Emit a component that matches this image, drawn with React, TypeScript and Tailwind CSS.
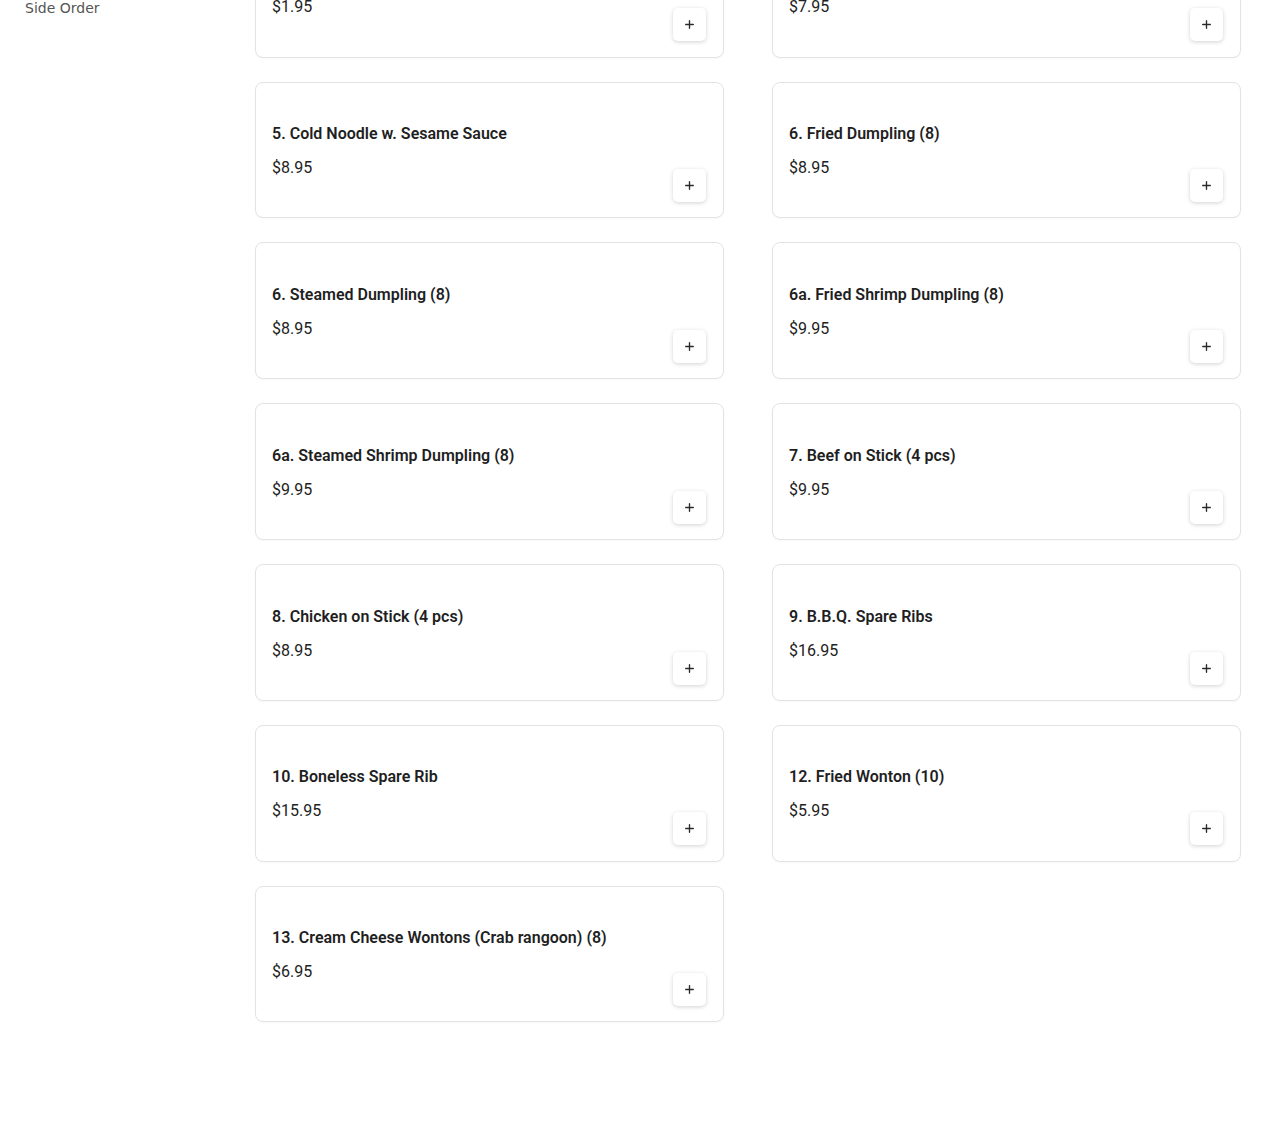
import { Plus } from 'lucide-react';

interface MenuItem {
  name: string;
  price: string;
}

const items: MenuItem[] = [
  { name: '3. Egg Roll (1)', price: '$1.95' },
  { name: '4. Egg Roll (4)', price: '$7.95' },
  { name: '5. Cold Noodle w. Sesame Sauce', price: '$8.95' },
  { name: '6. Fried Dumpling (8)', price: '$8.95' },
  { name: '6. Steamed Dumpling (8)', price: '$8.95' },
  { name: '6a. Fried Shrimp Dumpling (8)', price: '$9.95' },
  { name: '6a. Steamed Shrimp Dumpling (8)', price: '$9.95' },
  { name: '7. Beef on Stick (4 pcs)', price: '$9.95' },
  { name: '8. Chicken on Stick (4 pcs)', price: '$8.95' },
  { name: '9. B.B.Q. Spare Ribs', price: '$16.95' },
  { name: '10. Boneless Spare Rib', price: '$15.95' },
  { name: '12. Fried Wonton (10)', price: '$5.95' },
  { name: '13. Cream Cheese Wontons (Crab rangoon) (8)', price: '$6.95' },
];

function ItemCard({ item }: { item: MenuItem }) {
  return (
    <div className="h-[136.8px] rounded-lg border border-[#e3e3e3] bg-white pl-4 pr-[17px] pt-[39.5px] flex flex-col shadow-[0_1px_2px_rgba(0,0,0,0.03)]">
      <div className="text-[16px] leading-6 font-semibold text-[#1f1f1f]">{item.name}</div>
      <div className="mt-[10px] text-[16px] leading-6 text-[#222]">{item.price}</div>
      <div className="flex justify-end -mt-[11px]">
        <button className="w-[33px] h-[33px] rounded-[5px] bg-white flex items-center justify-center shadow-[0_1px_4px_rgba(0,0,0,0.18)] text-[#2a2a2a]">
          <Plus className="w-[13px] h-[13px]" strokeWidth={2.5} />
        </button>
      </div>
    </div>
  );
}

export default function App() {
  return (
    <div className="min-h-screen bg-white overflow-hidden" style={{ fontFamily: 'Roboto, sans-serif' }}>
      <div className="flex -mt-[79.2px] pb-[110px]">
        <aside className="w-[255px] shrink-0 pl-[25px]">
          <div className="pt-[77.2px] text-[14px] leading-5 text-[#555]" style={{ fontFamily: '"DejaVu Sans", sans-serif' }}>
            Side Order
          </div>
        </aside>
        <main className="flex-1 pr-[29px]">
          <div className="grid grid-cols-2 gap-x-[48px] gap-y-6">
            {items.map((item) => (
              <ItemCard key={item.name} item={item} />
            ))}
          </div>
        </main>
      </div>
    </div>
  );
}
